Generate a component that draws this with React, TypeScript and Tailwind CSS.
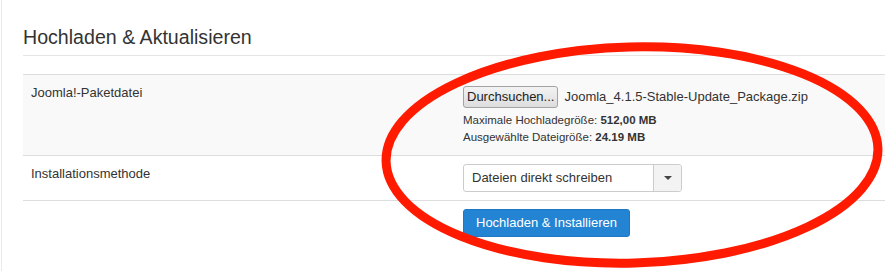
export default function App() {
  return (
    <div className="relative w-[885px] h-[271px] overflow-hidden bg-white text-[#333] font-['Liberation_Sans',Arial,sans-serif]">
      <div className="ml-[1px] h-full border-l border-[#ebebeb] pl-[21px]">
        <h2 className="pt-[25px] pb-[6px] text-[19.6px] leading-[24px] border-b border-[#e5e5e5]">
          Hochladen &amp; Aktualisieren
        </h2>

        <div className="mt-[18px] text-[13px]">
          {/* package file */}
          <div className="flex h-[81px] bg-[#f9f9f9] border-t border-[#dddddd]">
            <div className="w-[440px] px-2 pt-[9px] leading-[18px]">Joomla!-Paketdatei</div>
            <div className="pt-[11px]">
              <div className="flex items-center gap-[6px]">
                <button className="h-[22px] px-[3px] rounded-[3px] border border-[#a3a3a3] bg-gradient-to-b from-[#f3f3f3] to-[#dddddd] text-[13px] leading-[20px] text-[#222]">
                  Durchsuchen...
                </button>
                <span className="text-[13px] leading-[20px]">Joomla_4.1.5-Stable-Update_Package.zip</span>
              </div>
              <div className="mt-[4px] text-[11.5px] leading-[17px]">
                Maximale Hochladegröße: <b>512,00 MB</b>
              </div>
              <div className="text-[11.5px] leading-[17px]">
                Ausgewählte Dateigröße: <b>24.19 MB</b>
              </div>
            </div>
          </div>

          {/* install method */}
          <div className="flex h-[45px] border-t border-[#dddddd]">
            <div className="w-[440px] px-2 pt-[9px] leading-[18px]">Installationsmethode</div>
            <div className="pt-[8px]">
              <div className="flex w-[219px] h-[28px] rounded-[3px] border border-[#cccccc] bg-white">
                <span className="flex-1 pl-[8px] text-[13px] leading-[26px]">Dateien direkt schreiben</span>
                <span className="flex w-[28px] items-center justify-center border-l border-[#cccccc] bg-[#f3f3f3] rounded-r-[3px]">
                  <span className="w-0 h-0 border-l-[4px] border-r-[4px] border-t-[4px] border-l-transparent border-r-transparent border-t-[#444]" />
                </span>
              </div>
            </div>
          </div>

          {/* submit */}
          <div className="flex border-t border-[#dddddd]">
            <div className="w-[440px]" />
            <div className="pt-[8px]">
              <button className="h-[28px] px-[12px] rounded-[3px] border border-[#1f78c1] bg-[#2384d3] text-white text-[13px] leading-[26px]">
                Hochladen &amp; Installieren
              </button>
            </div>
          </div>
        </div>
      </div>

      {/* red marker ellipse */}
      <svg className="absolute inset-0 pointer-events-none" width="885" height="271" viewBox="0 0 885 271">
        <ellipse cx="632" cy="155" rx="246" ry="108" fill="none" stroke="#ff1a00" strokeWidth="9" transform="rotate(-1.5 632 155)" />
      </svg>
    </div>
  );
}
